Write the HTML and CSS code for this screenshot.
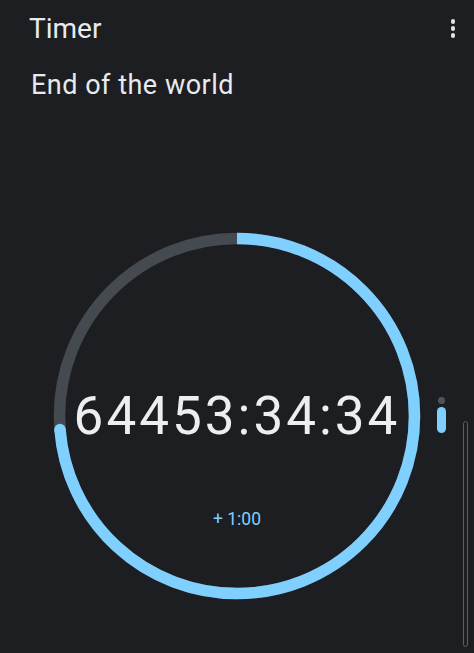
FILE: index.html
```html
<!DOCTYPE html>
<html>
<head>
<meta charset="utf-8">
<link rel="stylesheet" href="styles.css">
</head>
<body>
<div class="screen">
  <header class="header">
    <h1 class="title">Timer</h1>
    <div class="menu" aria-label="More options">
      <span class="dot"></span><span class="dot"></span><span class="dot"></span>
    </div>
  </header>
  <div class="label">End of the world</div>
  <main class="stage">
    <div class="dial">
      <svg class="ring" width="380" height="380" viewBox="0 0 380 380">
        <circle cx="190" cy="190" r="177.5" fill="none" stroke="#454a50" stroke-width="11.5"/>
        <circle cx="190" cy="190" r="177.5" fill="none" stroke="#7fcfff" stroke-width="11.5" stroke-dasharray="823 2000" transform="rotate(-90 190 190)"/>
        <circle cx="13" cy="203.6" r="5.75" fill="#7fcfff"/>
      </svg>
      <div class="time">64453:34:34</div>
      <div class="add">+ 1:00</div>
    </div>
  </main>
  <div class="pager">
    <span class="page-dot"></span>
    <span class="page-pill"></span>
  </div>
  <div class="scrollbar"></div>
</div>
</body>
</html>
```
FILE: styles.css
```css
html, body {
  margin: 0;
  padding: 0;
  background: #1c1e21;
}
.screen {
  position: relative;
  width: 474px;
  height: 653px;
  overflow: hidden;
  background: #1c1e21;
  color: #e8eaed;
  font-family: Roboto, "Noto Sans", "Liberation Sans", sans-serif;
}
.header {
  display: flex;
  align-items: center;
  justify-content: space-between;
  height: 58px;
  padding: 0 19px 0 29px;
}
.title {
  margin: 0;
  font-size: 28px;
  font-weight: 400;
  line-height: 1;
}
.menu {
  display: flex;
  flex-direction: column;
  gap: 2.5px;
  margin-top: -1px;
}
.dot {
  width: 4.5px;
  height: 4.5px;
  border-radius: 50%;
  background: #dfe1e4;
}
.label {
  padding-left: 31px;
  margin-top: 14px;
  font-size: 27px;
  letter-spacing: 0.5px;
  line-height: 1;
}
.stage {
  display: flex;
  justify-content: flex-start;
  padding-left: 47px;
  margin-top: 127px;
}
.dial {
  position: relative;
  width: 380px;
  height: 380px;
}
.ring {
  display: block;
}
.time {
  position: absolute;
  left: 0;
  right: 0;
  top: 160px;
  text-align: center;
  font-size: 53px;
  letter-spacing: 3px;
  line-height: 60px;
  color: #eceef1;
}
.add {
  position: absolute;
  left: 0;
  right: 0;
  top: 283px;
  text-align: center;
  font-size: 17.5px;
  color: #7fcfff;
}
.pager {
  position: absolute;
  left: 437px;
  top: 397px;
  display: flex;
  flex-direction: column;
  align-items: center;
  gap: 3px;
  width: 9px;
}
.page-dot {
  width: 7px;
  height: 7px;
  border-radius: 50%;
  background: #50545a;
}
.page-pill {
  width: 9px;
  height: 26px;
  border-radius: 5px;
  background: #7fcfff;
}
.scrollbar {
  position: absolute;
  left: 463px;
  top: 421px;
  width: 3px;
  height: 224px;
  border: 1.5px solid #5c6066;
  border-radius: 3px;
}
```
